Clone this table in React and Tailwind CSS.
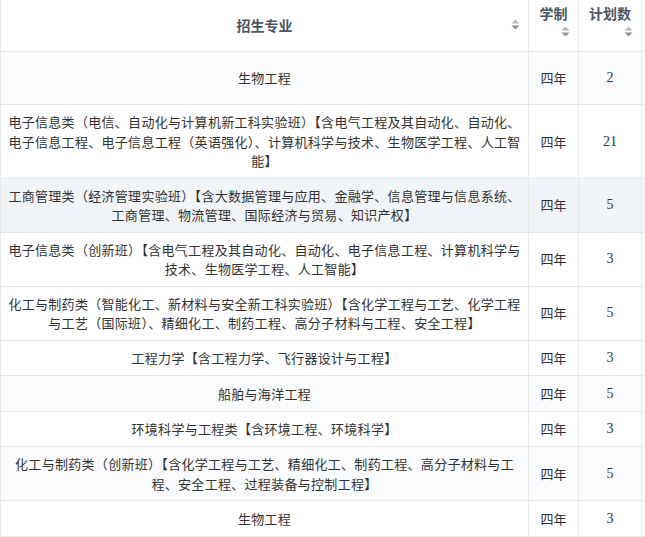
import React from 'react';

const ROWS = [
  { lines: ['生物工程'], num: '2', bg: 'bg-[#f9fbfd]', h: 'h-[53px]' },
  {
    lines: [
      '电子信息类（电信、自动化与计算机新工科实验班）【含电气工程及其自动化、自动化、',
      '电子信息工程、电子信息工程（英语强化）、计算机科学与技术、生物医学工程、人工智',
      '能】',
    ],
    num: '21',
    bg: 'bg-white',
  },
  {
    lines: [
      '工商管理类（经济管理实验班）【含大数据管理与应用、金融学、信息管理与信息系统、',
      '工商管理、物流管理、国际经济与贸易、知识产权】',
    ],
    num: '5',
    bg: 'bg-[#f2f5f8]',
  },
  {
    lines: [
      '电子信息类（创新班）【含电气工程及其自动化、自动化、电子信息工程、计算机科学与',
      '技术、生物医学工程、人工智能】',
    ],
    num: '3',
    bg: 'bg-white',
  },
  {
    lines: [
      '化工与制药类（智能化工、新材料与安全新工科实验班）【含化学工程与工艺、化学工程',
      '与工艺（国际班）、精细化工、制药工程、高分子材料与工程、安全工程】',
    ],
    num: '5',
    bg: 'bg-white',
  },
  { lines: ['工程力学【含工程力学、飞行器设计与工程】'], num: '3', bg: 'bg-white' },
  { lines: ['船舶与海洋工程'], num: '5', bg: 'bg-[#f9fbfd]' },
  { lines: ['环境科学与工程类【含环境工程、环境科学】'], num: '3', bg: 'bg-white' },
  {
    lines: [
      '化工与制药类（创新班）【含化学工程与工艺、精细化工、制药工程、高分子材料与工',
      '程、安全工程、过程装备与控制工程】',
    ],
    num: '5',
    bg: 'bg-[#f9fbfd]',
  },
  { lines: ['生物工程'], num: '3', bg: 'bg-white' },
];

function SortIcon() {
  return (
    <svg width="9" height="11" viewBox="0 0 9 11" className="shrink-0">
      <path d="M4.5 0.5 L8.5 4.5 L0.5 4.5 Z" fill="#b3b6ba" />
      <path d="M0.5 6.5 L8.5 6.5 L4.5 10.5 Z" fill="#8e9297" />
    </svg>
  );
}

export default function App() {
  return (
    <div
      className="w-[645px] h-[537px] overflow-hidden bg-white text-[13px] leading-[19.5px] text-[#333]"
      style={{ fontFamily: '"Noto Sans CJK SC", "Noto Sans", sans-serif' }}
    >
      <div className="w-[700px]">
        {/* header */}
        <div className="flex h-[52px] border-b border-[#e6e8eb] font-bold text-[14px] text-[#4d5663]">
          <div className="relative w-[529px] border-l border-r border-[#e6e8eb] flex items-center justify-center">
            <span>招生专业</span>
            <span className="absolute right-[8px] top-[19px]">
              <SortIcon />
            </span>
          </div>
          <div className="w-[50px] border-r border-[#e6e8eb] flex flex-col pt-[4px] pr-[8px]">
            <span className="text-center pl-[8px]">学制</span>
            <span className="self-end mt-[2px]">
              <SortIcon />
            </span>
          </div>
          <div className="w-[63px] border-r border-[#e6e8eb] flex flex-col pt-[4px] pr-[8px]">
            <span className="text-center pl-[8px] whitespace-nowrap">计划数</span>
            <span className="self-end mt-[2px]">
              <SortIcon />
            </span>
          </div>
          <div className="flex-1" />
        </div>

        {ROWS.map((r, i) => (
          <div key={i} className={`flex border-b border-[#e6e8eb] ${r.bg} ${r.h || ''}`}>
            <div className="w-[529px] min-h-[34.5px] border-l border-r border-[#e6e8eb] px-[10px] py-[7px] flex flex-col items-center justify-center text-center tracking-[0.3px]">
              {r.lines.map((l, j) => (
                <div key={j} className="whitespace-nowrap">{l}</div>
              ))}
            </div>
            <div className="w-[50px] border-r border-[#e6e8eb] flex items-center justify-center">
              四年
            </div>
            <div
              className="w-[63px] border-r border-[#e6e8eb] flex items-center justify-center text-[14px] text-[#2b3a4a]"
              style={{ fontFamily: '"Liberation Serif", "Noto Sans CJK SC", serif' }}
            >
              {r.num}
            </div>
            <div className="flex-1" />
          </div>
        ))}
      </div>
    </div>
  );
}
